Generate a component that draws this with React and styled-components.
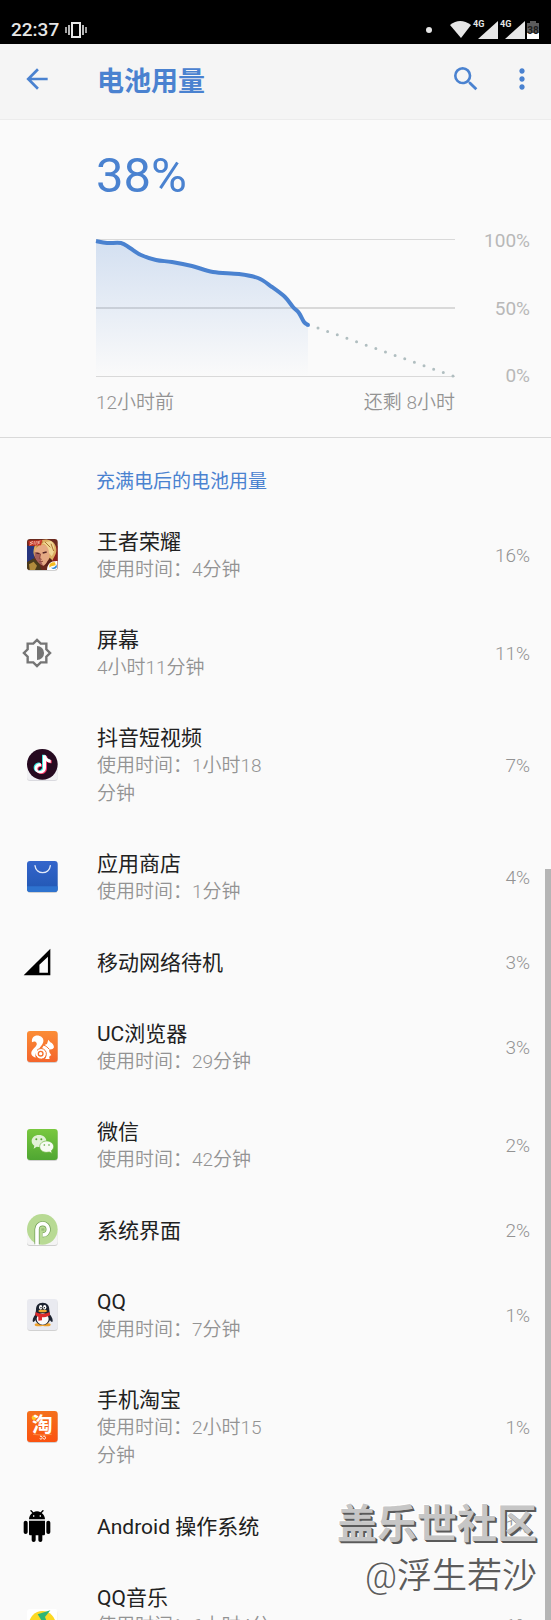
import React from 'react';
import styled, { createGlobalStyle, css } from 'styled-components';
import { MdArrowBack, MdMoreVert, MdSearch } from 'react-icons/md';

const BLUE = '#4a82d0';
const BACKGROUND = '#fafafa';
const BAR = '#f5f5f5';
const INK = '#212121';
const GRAY = '#939393';
const LIGHT_GRAY = '#b8b8b8';
const LINE = '#d9d9d9';

const GlobalStyle = createGlobalStyle`
  * {
    box-sizing: border-box;
  }

  body {
    margin: 0;
    background: ${BACKGROUND};
    font-family: Roboto, 'Noto Sans CJK SC', sans-serif;
  }
`;

const Screen = styled.div`
  position: relative;
  display: flex;
  flex-direction: column;
  height: 100vh;
  overflow: hidden;
`;

const StatusBar = styled.div`
  display: flex;
  flex: none;
  align-items: flex-end;
  justify-content: space-between;
  height: 44px;
  padding: 0 11px 4px;
  background: #000;
  color: #e6e6e6;
`;

const StatusGroup = styled.div`
  display: flex;
  align-items: center;
  gap: 6px;
`;

const Clock = styled.span`
  font-size: 19px;
  font-weight: 500;
  line-height: 20px;
`;

const AppBar = styled.header`
  display: flex;
  flex: none;
  align-items: center;
  height: 76px;
  padding: 0 13px 6px 21px;
  background: ${BAR};
  border-bottom: 1px solid #ececec;
`;

const IconButton = styled.button`
  display: flex;
  padding: 0;
  border: 0;
  background: none;
  color: ${BLUE};
  font-size: 32px;
  cursor: pointer;
`;

const Title = styled.h1`
  flex: 1;
  margin: 6px 0 0 44px;
  color: ${BLUE};
  font-size: 27px;
  font-weight: 700;
  line-height: 32px;
`;

const Actions = styled.div`
  display: flex;
  gap: 24px;
`;

const Content = styled.main`
  flex: 1;
  min-height: 0;
  overflow: hidden;
`;

const Summary = styled.section`
  display: grid;
  grid-template-columns: 1fr 75px;
  padding: 28px 21px 20px 96px;
  border-bottom: 1px solid ${LINE};
`;

const Level = styled.div`
  grid-column: 1 / -1;
  margin-bottom: 34px;
  color: ${BLUE};
  font-size: 49px;
  line-height: 56px;
`;

const Graph = styled.svg`
  display: block;
  width: 100%;
  height: 139px;
  overflow: visible;
`;

const Scale = styled.div`
  display: flex;
  flex-direction: column;
  justify-content: space-between;
  margin: -9px 0 -11px;
  color: ${LIGHT_GRAY};
  font-size: 19px;
  line-height: 24px;
  text-align: right;
`;

const Range = styled.div`
  display: flex;
  justify-content: space-between;
  margin-top: 12px;
  color: ${GRAY};
  font-size: 19px;
  font-weight: 350;
  line-height: 28px;
`;

const Heading = styled.h2`
  margin: 0;
  padding: 30px 21px 0 96px;
  color: ${BLUE};
  font-size: 19px;
  font-weight: 400;
  line-height: 28px;
`;

const List = styled.ul`
  display: flex;
  flex-direction: column;
  gap: 42px;
  margin: 0;
  padding: 32px 21px 0;
  list-style: none;
`;

const Row = styled.li`
  display: flex;
  align-items: center;
  min-height: 30px;
  line-height: 28px;
`;

const IconSlot = styled.div`
  flex: none;
  display: flex;
  width: 76px;
  height: 28px;
  align-items: center;
  padding-bottom: 2px;
  ${({ $app }) => $app && css`
    padding-left: 6px;
  `}
`;

const Labels = styled.div`
  flex: 1;
`;

const Name = styled.div`
  color: ${INK};
  font-size: 21px;
`;

const Time = styled.div`
  max-width: 178px;
  color: ${GRAY};
  font-size: 19px;
  font-weight: 350;
`;

const Percent = styled.div`
  color: ${GRAY};
  font-size: 19px;
  font-weight: 350;
`;

const ScrollThumb = styled.div`
  position: absolute;
  top: 869px;
  right: 0;
  bottom: 0;
  width: 6px;
  background: #b5b5b5;
`;

const Watermark = styled.div`
  position: absolute;
  right: 14px;
  bottom: 18px;
  text-align: right;
  white-space: nowrap;
  pointer-events: none;
`;

const Community = styled.div`
  color: #c6c6c6;
  font-size: 40px;
  font-weight: 700;
  line-height: 54px;
  text-shadow: 1px 1px 0 #5a5a5a, 2px 2px 0 #5a5a5a, -1px -1px 0 #fff;
`;

const Author = styled.div`
  color: #5c5c5c;
  font-size: 35px;
  font-weight: 350;
  line-height: 50px;
  text-shadow: -1px -1px 0 #fff;
`;

const AppSvg = styled.svg`
  display: block;
  width: 31px;
  height: 32px;
  overflow: visible;
`;

const GlyphSvg = styled.svg`
  display: block;
  width: 32px;
  height: 32px;
`;

function Tile({ fill }) {
  return (
    <>
      <rect x="1" y="4" width="91" height="92" rx="9" fill="#000" opacity="0.16" />
      <rect x="0" y="0" width="92" height="93" rx="9" fill={fill} />
    </>
  );
}

function GameIcon() {
  return (
    <AppSvg viewBox="0 0 93 96">
      <defs>
        <clipPath id="gameTile"><rect width="92" height="93" rx="9" /></clipPath>
      </defs>
      <Tile fill="#6a2a1e" />
      <g clipPath="url(#gameTile)">
        <path d="M0 20h22v40L0 70z" fill="#27357e" />
        <path d="M70 26l22-6v60H66z" fill="#8c1f1c" />
        <path d="M0 70l20-12 16 14 8 21H0z" fill="#4a3a1c" />
        <path d="M6 76l14-8 10 12-6 13H8z" fill="#b08a3c" />
        <path d="M20 32C24 8 44 0 62 2c18 3 28 18 26 34-2 16-12 24-16 38l-8-10-36-6c-8-8-10-16-8-26z" fill="#dcae62" />
        <path d="M24 34c6-12 16-16 26-16 12 2 18 12 18 24 0 14-6 30-18 38-12-4-22-16-25-26z" fill="#e5a983" />
        <path d="M23 38c-2 16 4 30 25 42-6-12-8-20-9-34z" fill="#a5605c" />
        <path d="M44 12c12 2 22 14 22 30l8 10c10-14 12-34-2-46z" fill="#f0d694" />
        <path d="M28 42l10 2M47 42l12-3" stroke="#552626" strokeWidth="4" />
        <path d="M41 44l-4 15 7 2M36 68l12-1" fill="none" stroke="#91493c" strokeWidth="3" />
        <path d="M54 80l14-24 8 8-6 20z" fill="#5c211a" />
        <path d="M28 24L48 8M54 9l16 16M72 14l8 22" fill="none" stroke="#a97332" strokeWidth="3" />
        <path d="M4 5l42-2-4 16-36 2z" fill="#c63225" />
        <path d="M18 7l-9 4 8 2-9 5M22 6l-1 11M28 6l-2 11M40 6l-9 3 7 3-8 4" fill="none" stroke="#f6dcc8" strokeWidth="2" />
        <path d="M60 93c0-18 12-28 32-27v27z" fill="#fff" />
        <path d="M84 70c-12-2-20 6-16 16 4-6 10-4 18-8z" fill="#f5bd23" />
        <path d="M72 86c8 2 14-2 16-10l2 8c-4 7-12 8-18 2z" fill="#2d86d8" />
      </g>
    </AppSvg>
  );
}

function DisplayIcon() {
  return (
    <GlyphSvg viewBox="0 0 24 24">
      <path
        d="M12 2.2l2.8 2.8H19v4.2l2.8 2.8-2.8 2.8V19h-4.2L12 21.8 9.2 19H5v-4.2L2.2 12 5 9.2V5h4.2z"
        fill="none"
        stroke="#757575"
        strokeWidth="1.8"
      />
      <path d="M12 6.7a5.3 5.3 0 0 1 0 10.6z" fill="#757575" />
    </GlyphSvg>
  );
}

function DouyinIcon() {
  const note = 'M48 19h9c1 8 6 12 14 13v9c-6 0-10-2-14-5v19c0 12-8 18-17 18-10 0-17-7-17-15 0-10 9-17 19-15v9c-6-2-11 2-11 7 0 4 4 7 8 7 5 0 9-4 9-9z';
  return (
    <AppSvg viewBox="0 0 93 96">
      <path d="M0 60h92v27q0 9-9 9H9q-9 0-9-9z" fill="#dadadf" />
      <path d="M0 55h92v29q0 9-9 9H9q-9 0-9-9z" fill="#f0f0f3" />
      <circle cx="46" cy="46" r="46" fill="#260a20" />
      <path d={note} fill="#35e4df" transform="translate(-3 -2)" />
      <path d={note} fill="#f03566" transform="translate(3 2)" />
      <path d={note} fill="#fff" />
    </AppSvg>
  );
}

function StoreIcon() {
  return (
    <AppSvg viewBox="0 0 93 96">
      <defs>
        <linearGradient id="store" x2="0" y2="1">
          <stop offset="0" stopColor="#3465cb" />
          <stop offset="1" stopColor="#2157b3" />
        </linearGradient>
      </defs>
      <Tile fill="url(#store)" />
      <path d="M0 76h92v8q0 9-9 9H9q-9 0-9-9z" fill="#2e73cf" />
      <path d="M24 14c3 28 43 28 46 0" fill="none" stroke="#e4ebf8" strokeWidth="4" strokeLinecap="round" />
    </AppSvg>
  );
}

function CellIcon() {
  return (
    <GlyphSvg viewBox="0 0 24 24">
      <path d="M2 22h20V2zM13.8 20v-6l6.4-6v12z" fill="#000" fillRule="evenodd" />
    </GlyphSvg>
  );
}

function UcIcon() {
  return (
    <AppSvg viewBox="0 0 93 96">
      <defs>
        <linearGradient id="uc" x2="0" y2="1">
          <stop offset="0" stopColor="#fb8c35" />
          <stop offset="1" stopColor="#f4652c" />
        </linearGradient>
      </defs>
      <Tile fill="url(#uc)" />
      <path
        d="M15 34C12 18 26 10 38 15c12 4 14 15 8 25-5 8-10 10-9 17-10 4-13 12-11 23-14-4-16-14-10-22 6-9 15-13 13-21-2-7-9-7-14-3z"
        fill="#fff"
      />
      <path d="M60 39l4-13 6 8c7 2 10 8 11 15-3 6-8 7-14 6-2 8 2 12 6 18-6 1-8 6-5 11H54c8-8 3-22-9-27 0-10 6-16 15-18z" fill="#fff" />
      <circle cx="42" cy="68" r="16" fill="#fff" />
      <path d="M30 58a16 16 0 1 1-3 16" fill="none" stroke="#f5702d" strokeWidth="3" />
      <circle cx="41" cy="68" r="7" fill="none" stroke="#f5702d" strokeWidth="4" />
      <path d="M50 42c7 3 12 7 16 12" stroke="#f5702d" strokeWidth="3" fill="none" />
    </AppSvg>
  );
}

function WechatIcon() {
  return (
    <AppSvg viewBox="0 0 93 96">
      <defs>
        <linearGradient id="wechat" x2="0" y2="1">
          <stop offset="0" stopColor="#79c83f" />
          <stop offset="1" stopColor="#4fa632" />
        </linearGradient>
      </defs>
      <Tile fill="url(#wechat)" />
      <path d="M36 18c13 0 22 8 22 18S49 54 36 54l-7-1-9 6 2-9c-5-3-8-8-8-14 0-10 9-18 22-18z" fill="#e2f1d6" />
      <path d="M59 36c12 0 21 8 21 17 0 5-3 9-7 12l2 8-8-4-8 1c-12 0-21-8-21-17s9-17 21-17z" fill="#f7fbf2" stroke="#66b33a" strokeWidth="2" />
      <g fill="#57a536">
        <circle cx="28" cy="31" r="3" />
        <circle cx="43" cy="31" r="3" />
        <circle cx="52" cy="48" r="2.5" />
        <circle cx="66" cy="48" r="2.5" />
      </g>
    </AppSvg>
  );
}

function SystemIcon() {
  return (
    <AppSvg viewBox="0 0 93 96">
      <path d="M0 55h92v32q0 9-9 9H9q-9 0-9-9z" fill="#cfcfcf" />
      <path d="M0 52h92v32q0 9-9 9H9q-9 0-9-9z" fill="#f4f4f4" />
      <circle cx="46" cy="46" r="46" fill="#b8da94" />
      <path d="M30 91V46a17 17 0 1 1 17 17" fill="none" stroke="#6c9950" strokeWidth="15" />
      <path d="M30 93V46a17 17 0 1 1 17 17" fill="none" stroke="#fff" strokeWidth="11" />
      <path d="M43 43h9v7h-9z" fill="#96bb79" />
    </AppSvg>
  );
}

function QqIcon() {
  return (
    <AppSvg viewBox="0 0 93 96">
      <Tile fill="#e9eaf0" />
      <ellipse cx="36" cy="77" rx="13" ry="5" fill="#eda02c" />
      <ellipse cx="58" cy="77" rx="13" ry="5" fill="#eda02c" />
      <path d="M27 44c-9 10-12 20-9 25 4 0 7-5 9-9zM67 44c9 10 12 20 9 25-4 0-7-5-9-9z" fill="#1c2330" />
      <path d="M47 11c14 0 20 9 20 22l3 22c0 14-9 23-23 23s-23-9-23-23l3-22c0-13 6-22 20-22z" fill="#1c2330" />
      <ellipse cx="47" cy="60" rx="18" ry="17" fill="#fafafa" />
      <path d="M26 39c12 7 30 7 42 0l1 10c-10 5-16 6-24 6v9l-11 1V53l-9-4z" fill="#dc2a2b" />
      <ellipse cx="41" cy="25" rx="5" ry="7" fill="#fff" />
      <ellipse cx="53" cy="25" rx="5" ry="7" fill="#fff" />
      <circle cx="42" cy="26" r="2" />
      <circle cx="52" cy="26" r="2" />
      <ellipse cx="47" cy="36" rx="13" ry="4" fill="#f0ab2d" />
    </AppSvg>
  );
}

function TaobaoIcon() {
  return (
    <AppSvg viewBox="0 0 93 96">
      <defs>
        <linearGradient id="taobao" x2="0" y2="1">
          <stop offset="0" stopColor="#f4701c" />
          <stop offset="1" stopColor="#fb5210" />
        </linearGradient>
      </defs>
      <Tile fill="url(#taobao)" />
      <circle cx="21" cy="20" r="7" fill="#ffc928" />
      <text x="46" y="62" textAnchor="middle" fontFamily="Noto Sans CJK SC" fontSize="62" fontWeight="700" fill="#fff">
        淘
      </text>
      <path d="M18 70q28 5 56 0" fill="none" stroke="#fda35e" strokeWidth="2" />
      <path d="M39 76c4-2 8 2 6 6s-5 4-6 0M49 76c4-2 8 2 6 6s-5 4-6 0" fill="none" stroke="#fff" strokeWidth="3" />
    </AppSvg>
  );
}

function AndroidIcon() {
  return (
    <GlyphSvg viewBox="0 0 24 24">
      <path d="M6 18c0 .55.45 1 1 1h1v3.5c0 .83.67 1.5 1.5 1.5s1.5-.67 1.5-1.5V19h2v3.5c0 .83.67 1.5 1.5 1.5s1.5-.67 1.5-1.5V19h1c.55 0 1-.45 1-1V8H6v10zM3.5 8C2.67 8 2 8.67 2 9.5v7c0 .83.67 1.5 1.5 1.5S5 17.33 5 16.5v-7C5 8.67 4.33 8 3.5 8zm17 0c-.83 0-1.5.67-1.5 1.5v7c0 .83.67 1.5 1.5 1.5s1.5-.67 1.5-1.5v-7c0-.83-.67-1.5-1.5-1.5zm-4.97-5.84l1.3-1.3c.2-.2.2-.51 0-.71-.2-.2-.51-.2-.71 0l-1.48 1.48C13.85 1.23 12.95 1 12 1c-.96 0-1.86.23-2.66.63L7.85.15c-.2-.2-.51-.2-.71 0-.2.2-.2.51 0 .71l1.31 1.31C6.97 3.26 6 5.01 6 7h12c0-1.99-.97-3.75-2.47-4.84zM10 5H9V4h1v1zm5 0h-1V4h1v1z" />
    </GlyphSvg>
  );
}

function MusicIcon() {
  return (
    <AppSvg viewBox="0 0 93 96">
      <Tile fill="#fff" />
      <circle cx="46" cy="46" r="40" fill="#fcd823" />
      <path d="M32 16l38-12-16 20 12 32a16 14 0 1 1-14-8z" fill="#2fb573" />
    </AppSvg>
  );
}

const APPS = [
  { name: '王者荣耀', time: '使用时间：4分钟', percent: '16%', Icon: GameIcon, app: true },
  { name: '屏幕', time: '4小时11分钟', percent: '11%', Icon: DisplayIcon },
  { name: '抖音短视频', time: '使用时间：1小时18分钟', percent: '7%', Icon: DouyinIcon, app: true },
  { name: '应用商店', time: '使用时间：1分钟', percent: '4%', Icon: StoreIcon, app: true },
  { name: '移动网络待机', percent: '3%', Icon: CellIcon },
  { name: 'UC浏览器', time: '使用时间：29分钟', percent: '3%', Icon: UcIcon, app: true },
  { name: '微信', time: '使用时间：42分钟', percent: '2%', Icon: WechatIcon, app: true },
  { name: '系统界面', percent: '2%', Icon: SystemIcon, app: true },
  { name: 'QQ', time: '使用时间：7分钟', percent: '1%', Icon: QqIcon, app: true },
  { name: '手机淘宝', time: '使用时间：2小时15分钟', percent: '1%', Icon: TaobaoIcon, app: true },
  { name: 'Android 操作系统', percent: '1%', Icon: AndroidIcon },
  { name: 'QQ音乐', time: '使用时间：6小时4分钟', percent: '1%', Icon: MusicIcon, app: true },
];

const HISTORY = [
  [0, 3], [11, 5], [25, 5], [34, 10], [45, 17], [60, 22], [76, 24], [96, 28], [117, 34],
  [143, 36], [162, 40], [176, 49], [189, 59], [197, 69], [203, 75], [208, 84], [212, 87],
];

// Catmull-Rom through the samples, written as cubic segments
function smoothPath(points) {
  return points.slice(1).reduce((path, point, i) => {
    const before = points[i - 1] || points[i];
    const from = points[i];
    const after = points[i + 2] || point;
    const c1 = [from[0] + (point[0] - before[0]) / 6, from[1] + (point[1] - before[1]) / 6];
    const c2 = [point[0] - (after[0] - from[0]) / 6, point[1] - (after[1] - from[1]) / 6];
    return `${path} C${c1} ${c2} ${point}`;
  }, `M${points[0]}`);
}

function BatteryGraph() {
  const curve = smoothPath(HISTORY);
  return (
    <Graph viewBox="0 0 359 139" preserveAspectRatio="none" role="img" aria-label="电池用量">
      <defs>
        <linearGradient id="area" x2="0" y2="1">
          <stop offset="0" stopColor={BLUE} stopOpacity="0.22" />
          <stop offset="1" stopColor={BLUE} stopOpacity="0" />
        </linearGradient>
      </defs>
      <path d="M0 1.5H359M0 138.5H359" stroke={LINE} />
      <path d="M0 70H359" stroke={LINE} strokeWidth="2" />
      <path d={`${curve} V138 H0z`} fill="url(#area)" />
      <path d="M222 90L357 138" fill="none" stroke="#b0bec0" strokeWidth="3" strokeLinecap="round" strokeDasharray="0 10.23" />
      <path d={curve} fill="none" stroke={BLUE} strokeWidth="4" strokeLinejoin="round" />
      <circle cx="212" cy="87" r="2" fill={BLUE} />
    </Graph>
  );
}

function VibrateIcon() {
  return (
    <svg width="22" height="16" viewBox="0 0 22 16" fill="none" stroke="#e6e6e6" strokeWidth="2">
      <path d="M7 1h8v14H7z" />
      <path d="M4 3v10M18 3v10" strokeWidth="1.6" />
      <path d="M1 5v6M21 5v6" strokeWidth="1.4" />
    </svg>
  );
}

function StatusIcons() {
  return (
    <svg width="115" height="24" viewBox="0 0 115 24" fill="#e6e6e6" fontFamily="Roboto" fontWeight="700">
      <circle cx="4" cy="14" r="3" />
      <path d="M25 9q10-8 21 0L36 22z" />
      <text x="48" y="11" fontSize="9">4G</text>
      <path d="M53 23L73 5v18z" />
      <text x="75" y="11" fontSize="9">4G</text>
      <path d="M80 23l20-18v18z" />
      <path d="M102 7h3V5h6v2h3v16h-12z" fill="#5c5c5c" />
      <path d="M102 17h12v6h-12z" fill="#fff" />
      <text x="108" y="18" fontSize="10" textAnchor="middle" fill="#1c1c1c">38</text>
    </svg>
  );
}

export default function App() {
  return (
    <>
      <GlobalStyle />
      <Screen>
        <StatusBar>
          <StatusGroup>
            <Clock>22:37</Clock>
            <VibrateIcon />
          </StatusGroup>
          <StatusIcons />
        </StatusBar>
        <AppBar>
          <IconButton type="button" aria-label="返回"><MdArrowBack /></IconButton>
          <Title>电池用量</Title>
          <Actions>
            <IconButton type="button" aria-label="搜索"><MdSearch /></IconButton>
            <IconButton type="button" aria-label="更多选项"><MdMoreVert /></IconButton>
          </Actions>
        </AppBar>
        <Content>
          <Summary>
            <Level>38%</Level>
            <BatteryGraph />
            <Scale>
              <span>100%</span>
              <span>50%</span>
              <span>0%</span>
            </Scale>
            <Range>
              <span>12小时前</span>
              <span>还剩 8小时</span>
            </Range>
          </Summary>
          <Heading>充满电后的电池用量</Heading>
          <List>
            {APPS.map(({ name, time, percent, Icon, app }) => (
              <Row key={name}>
                <IconSlot $app={app}><Icon /></IconSlot>
                <Labels>
                  <Name>{name}</Name>
                  {time && <Time>{time}</Time>}
                </Labels>
                <Percent>{percent}</Percent>
              </Row>
            ))}
          </List>
        </Content>
        <ScrollThumb />
        <Watermark>
          <Community>盖乐世社区</Community>
          <Author>@浮生若沙</Author>
        </Watermark>
      </Screen>
    </>
  );
}
